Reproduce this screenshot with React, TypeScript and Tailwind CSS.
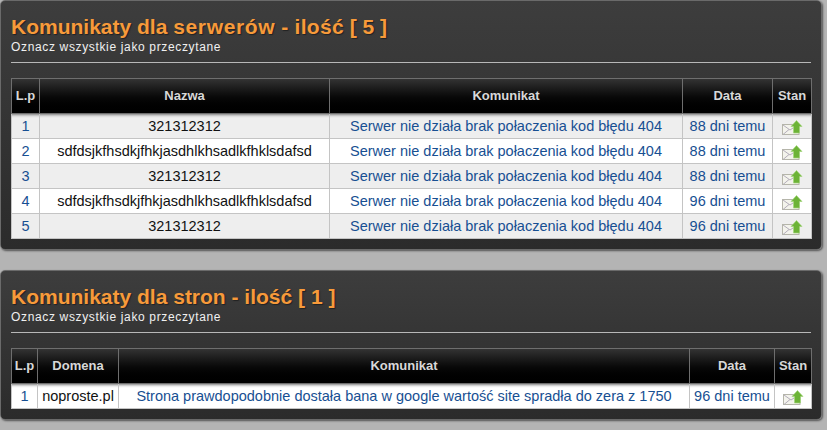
import type { ReactNode } from "react";

const F = "[font-family:'Liberation_Sans',Arial,sans-serif]";

function MailIcon() {
  return (
    <svg width="21" height="15" viewBox="0 0 21 15" className="mx-auto block">
      <rect x="0.500" y="4.500" width="16.500" height="10" fill="#f3f3ec" stroke="#b5b5aa" />
      <path d="M1 5l7 5 3-2M1 14.500l6-5" fill="none" stroke="#b3adba" strokeWidth="1" />
      <path d="M14.500 0.500l5.500 6h-2.500v6.500h-6v-6.500H9z" fill="#6cb337" stroke="#a4d67c" strokeWidth="0.700" />
    </svg>
  );
}

type Col = { label: string; w: string };

function Panel({ title, cols, rows, className }: { title: ReactNode; cols: Col[]; rows: string[][]; className: string }) {
  const first = "shadow-[inset_0_4px_3px_-3px_#777]";
  return (
    <section className={`${className} mr-[5px] rounded-[5px] border border-[#6a6a6a] bg-gradient-to-b from-[#3d3d3d] to-[#2b2b2b] px-[10px] shadow-[1px_1px_2px_#555]`}>
      <h2 className="pt-[12px] text-[21px] leading-[28px] font-bold text-[#f79a3a] [text-shadow:1px_1px_1px_#222]">{title}</h2>
      <p className="text-[12px] leading-[13px] tracking-[0.65px] text-[#f0f0f0]">Oznacz wszystkie jako przeczytane</p>
      <div className="mt-[8px] h-px bg-[#b8b8b8]" />
      <table className="mt-[15px] w-full table-fixed border-collapse">
        <thead>
          <tr className="h-[35px] bg-gradient-to-b from-[#333333] via-[#0a0a0a] to-black">
            {cols.map((c) => (
              <th key={c.label} className={`${c.w} border border-[#6e6e6e] p-0 text-center text-[13px] font-bold text-[#d8d8d8]`}>{c.label}</th>
            ))}
          </tr>
        </thead>
        <tbody>
          {rows.map((r, i) => (
            <tr key={i} className={i % 2 === 0 && rows.length > 1 ? "bg-[#eeeeee]" : "bg-white"}>
              {r.map((v, j) => {
                const dark = j === 1 && cols[1].label !== "Komunikat";
                return (
                  <td key={j} className={`h-[25px] border border-[#c4c4c4] p-0 text-center text-[14.500px] leading-[20px] whitespace-nowrap ${dark ? "text-[#111111]" : "text-[#174f92]"} ${i === 0 ? first : ""}`}>{v}</td>
                );
              })}
              <td className={`h-[25px] border border-[#c4c4c4] p-0 pt-[2px] text-center ${i === 0 ? first : ""}`}><MailIcon /></td>
            </tr>
          ))}
        </tbody>
      </table>
    </section>
  );
}

const MSG = "Serwer nie działa brak połaczenia kod błędu 404";
const A = "321312312";
const B = "sdfdsjkfhsdkjfhkjasdhlkhsadlkfhklsdafsd";

export default function App() {
  return (
    <div className={`${F} h-[430px] w-[827px] overflow-hidden bg-[#b4b4b4]`}>
      <Panel
        className="h-[250px]"
        title={<>Komunikaty dla <span className="tracking-[0.65px]">serwerów</span> <span className="tracking-[0.3px]">- ilość</span> [ 5 ]</>}
        cols={[
          { label: "L.p", w: "w-[28px]" },
          { label: "Nazwa", w: "w-[290px]" },
          { label: "Komunikat", w: "w-[353px]" },
          { label: "Data", w: "w-[90px]" },
          { label: "Stan", w: "w-[39px]" },
        ]}
        rows={[
          ["1", A, MSG, "88 dni temu"],
          ["2", B, MSG, "88 dni temu"],
          ["3", A, MSG, "88 dni temu"],
          ["4", B, MSG, "96 dni temu"],
          ["5", A, MSG, "96 dni temu"],
        ]}
      />
      <Panel
        className="mt-[20px] h-[150px]"
        title="Komunikaty dla stron - ilość [ 1 ]"
        cols={[
          { label: "L.p", w: "w-[26px]" },
          { label: "Domena", w: "w-[81px]" },
          { label: "Komunikat", w: "w-[571px]" },
          { label: "Data", w: "w-[85px]" },
          { label: "Stan", w: "w-[37px]" },
        ]}
        rows={[["1", "noproste.pl", "Strona prawdopodobnie dostała bana w google wartość site spradła do zera z 1750", "96 dni temu"]]}
      />
    </div>
  );
}
